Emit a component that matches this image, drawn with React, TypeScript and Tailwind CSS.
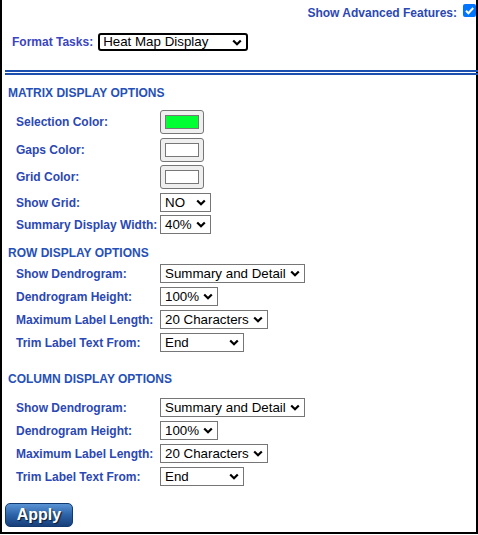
import React from 'react';

const labelCls = 'text-[12px] font-bold text-[#2b48b3] leading-[14px]';
const headCls = 'text-[12px] font-bold text-[#2650b8] leading-[14px] pl-[6px]';

const Chevron = () => (
  <svg width="10" height="7" viewBox="0 0 10 7" className="shrink-0">
    <path d="M1.2 1.5l3.8 3.8 3.8-3.8" fill="none" stroke="#000" strokeWidth="2.2" />
  </svg>
);

const Dropdown = ({ value, width, focused }: { value: string; width: number; focused?: boolean }) => (
  <div
    className={
      focused
        ? 'flex items-center justify-between h-[18px] border-2 border-black rounded-[3px] bg-white pl-[3px] pr-[4px]'
        : 'flex items-center justify-between h-[19px] border border-[#767676] bg-white pl-[4px] pr-[4px]'
    }
    style={{ width }}
  >
    <span className="text-[13.33px] leading-none text-black whitespace-nowrap">{value}</span>
    <Chevron />
  </div>
);

const ColorBox = ({ color }: { color: string }) => (
  <div className="w-[44px] h-[24px] bg-[#efefef] border border-[#767676] rounded-[3px] flex items-center justify-center">
    <div className="w-[34px] h-[14px] border border-[#777777]" style={{ backgroundColor: color }} />
  </div>
);

const Row = ({ label, children, className }: { label: string; children: React.ReactNode; className?: string }) => (
  <div className={'flex items-center ' + (className ?? '')}>
    <div className={'w-[158px] pl-[14px] ' + labelCls}>{label}</div>
    {children}
  </div>
);

const DendroRows = () => (
  <>
    <Row label="Show Dendrogram:" className="mt-[4px]">
      <Dropdown value="Summary and Detail" width={145} />
    </Row>
    <Row label="Dendrogram Height:" className="mt-[4px]">
      <Dropdown value="100%" width={58} />
    </Row>
    <Row label="Maximum Label Length:" className="mt-[4px]">
      <Dropdown value="20 Characters" width={108} />
    </Row>
    <Row label="Trim Label Text From:" className="mt-[4px]">
      <Dropdown value="End" width={84} />
    </Row>
  </>
);

export default function App() {
  return (
    <div
      className="w-[478px] h-[534px] bg-white border-l-2 border-r-2 border-b-2 border-black flex flex-col"
      style={{ fontFamily: '"Liberation Sans", Arial, sans-serif' }}
    >
      {/* Top bar */}
      <div className="flex justify-end items-start h-[22px] pt-[4px]">
        <span className="text-[12px] font-bold text-[#2b48b3] leading-[14px] mt-[2px]">Show Advanced Features:</span>
        <div className="ml-[6px] w-[13px] h-[13px] bg-[#0075ff] rounded-[2px] flex items-center justify-center">
          <svg width="11" height="11" viewBox="0 0 11 11">
            <path d="M2 5.8l2.4 2.4L9.2 3" fill="none" stroke="#fff" strokeWidth="2" />
          </svg>
        </div>
      </div>

      {/* Format tasks */}
      <div className="flex items-center mt-[11px] pl-[10px]">
        <span className="text-[12px] font-bold text-[#3a45bf] leading-[14px] mr-[5px]">Format Tasks:</span>
        <Dropdown value="Heat Map Display" width={150} focused />
      </div>

      <div className="mt-[19px] ml-[3px] -mr-[2px] border-t-[5px] border-double border-[#1c4fae]" />

      {/* Matrix */}
      <div className={headCls + ' mt-[11px]'}>MATRIX DISPLAY OPTIONS</div>
      <Row label="Selection Color:" className="mt-[10px]">
        <ColorBox color="#00ff33" />
      </Row>
      <Row label="Gaps Color:" className="mt-[4px]">
        <ColorBox color="#ffffff" />
      </Row>
      <Row label="Grid Color:" className="mt-[3px]">
        <ColorBox color="#ffffff" />
      </Row>
      <Row label="Show Grid:" className="mt-[4px]">
        <Dropdown value="NO" width={51} />
      </Row>
      <Row label="Summary Display Width:" className="mt-[3px]">
        <Dropdown value="40%" width={51} />
      </Row>

      {/* Row */}
      <div className={headCls + ' mt-[12px]'}>ROW DISPLAY OPTIONS</div>
      <DendroRows />

      {/* Column */}
      <div className={headCls + ' mt-[20px]'}>COLUMN DISPLAY OPTIONS</div>
      <div className="mt-[8px]" />
      <DendroRows />

      <div className="mt-[17px] pl-[3px]">
        <button className="w-[68px] h-[24px] rounded-[5px] border border-[#123a70] bg-gradient-to-b from-[#5a94d4] via-[#2c63a8] to-[#173f7a] text-white text-[16px] font-bold leading-none [text-shadow:1px_1px_1px_#0a1a33]">
          Apply
        </button>
      </div>
    </div>
  );
}
